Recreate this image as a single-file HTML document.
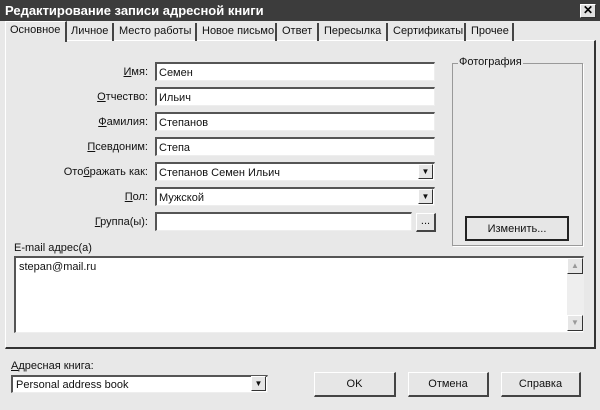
<!DOCTYPE html>
<html><head><meta charset="utf-8"><style>
*{box-sizing:border-box;margin:0;padding:0}
body{width:600px;height:410px;background:#e8e8e8;font-family:"Liberation Sans",sans-serif;font-size:11px;color:#111;position:relative;overflow:hidden}
.a{position:absolute}
.title{left:0;top:0;width:600px;height:21px;background:#3c3c3c;color:#fff;font-weight:bold;font-size:13px;padding:3px 0 0 5px}
.close{left:580px;top:4px;width:16px;height:14px;background:#e0e0e0;border:1px solid #fff;border-right-color:#333;border-bottom-color:#333;color:#000;font-size:12px;line-height:11px;text-align:center;font-weight:bold}
.tab{top:23px;height:18px;padding:2px 0 0 3px;border-right:2px solid #444;font-size:11px}
.panel{left:5px;top:40px;width:591px;height:309px;border:1px solid #fff;border-right:2px solid #333;border-bottom:2px solid #333}
.lbl{width:140px;text-align:right;left:8px}
.in{background:#fff;border-top:2px solid #555;border-left:2px solid #555;border-bottom:1px solid #eee;border-right:1px solid #eee;height:19px;padding:3px 2px 0;font-size:11px}
.dd{width:15px;height:15px;background:#e6e6e6;border:1px solid #fff;border-right-color:#333;border-bottom-color:#333;font-size:8px;text-align:center;line-height:13px;padding:0}
.btn{background:#e6e6e6;border:1px solid #fff;border-right:2px solid #444;border-bottom:2px solid #444;text-align:center;font-size:11px;padding-top:5px}
u{text-decoration:underline}
</style></head><body>
<div class="a title">Редактирование записи адресной книги</div>
<div class="a close">✕</div>
<div class="a panel"></div>
<div class="a" style="left:5px;top:21px;width:62px;height:21px;background:#e8e8e8;border:1px solid #fff;border-bottom:none;border-right:2px solid #444"></div>
<div class="a" style="left:10px;top:24px">Основное</div>
<div class="a tab" style="left:68px;width:46px">Личное</div>
<div class="a tab" style="left:116px;width:81px">Место работы</div>
<div class="a tab" style="left:199px;width:78px">Новое письмо</div>
<div class="a tab" style="left:279px;width:40px">Ответ</div>
<div class="a tab" style="left:321px;width:67px">Пересылка</div>
<div class="a tab" style="left:390px;width:76px">Сертификаты</div>
<div class="a tab" style="left:468px;width:46px">Прочее</div>

<div class="a lbl" style="top:66px"><u>И</u>мя:</div>
<div class="a in" style="left:155px;top:62px;width:280px">Семен</div>
<div class="a lbl" style="top:91px"><u>О</u>тчество:</div>
<div class="a in" style="left:155px;top:87px;width:280px">Ильич</div>
<div class="a lbl" style="top:116px"><u>Ф</u>амилия:</div>
<div class="a in" style="left:155px;top:112px;width:280px">Степанов</div>
<div class="a lbl" style="top:141px"><u>П</u>севдоним:</div>
<div class="a in" style="left:155px;top:137px;width:280px">Степа</div>
<div class="a lbl" style="top:166px">Ото<u>б</u>ражать как:</div>
<div class="a in" style="left:155px;top:162px;width:280px">Степанов Семен Ильич</div>
<div class="a dd" style="left:418px;top:164px">▼</div>
<div class="a lbl" style="top:191px"><u>П</u>ол:</div>
<div class="a in" style="left:155px;top:187px;width:280px">Мужской</div>
<div class="a dd" style="left:418px;top:189px">▼</div>
<div class="a lbl" style="top:216px"><u>Г</u>руппа(ы):</div>
<div class="a in" style="left:155px;top:212px;width:257px"></div>
<div class="a btn" style="left:416px;top:213px;width:20px;height:19px;padding-top:1px">...</div>

<div class="a" style="left:452px;top:63px;width:131px;height:183px;border:1px solid #999;box-shadow:1px 1px 0 #fff"></div>
<div class="a" style="left:458px;top:56px;background:#e8e8e8;padding:0 1px">Фотография</div>
<div class="a btn" style="left:465px;top:216px;width:104px;height:25px;border:2px solid #222;padding-top:5px">Изменить...</div>

<div class="a" style="left:14px;top:242px">E-mail адрес(а)</div>
<div class="a in" style="left:14px;top:256px;width:570px;height:77px;padding:3px 3px">stepan@mail.ru</div>
<div class="a" style="left:567px;top:258px;width:16px;height:73px;background:#eee"></div>
<div class="a dd" style="left:567px;top:258px;width:16px;height:16px;color:#999">▲</div>
<div class="a dd" style="left:567px;top:315px;width:16px;height:16px;color:#999">▼</div>

<div class="a" style="left:11px;top:360px"><u>А</u>дресная книга:</div>
<div class="a in" style="left:11px;top:375px;width:257px;height:18px;padding:2px 3px 0">Personal address book</div>
<div class="a dd" style="left:251px;top:376px">▼</div>
<div class="a btn" style="left:314px;top:372px;width:82px;height:25px">OK</div>
<div class="a btn" style="left:408px;top:372px;width:81px;height:25px">Отмена</div>
<div class="a btn" style="left:501px;top:372px;width:80px;height:25px">Справка</div>
</body></html>
